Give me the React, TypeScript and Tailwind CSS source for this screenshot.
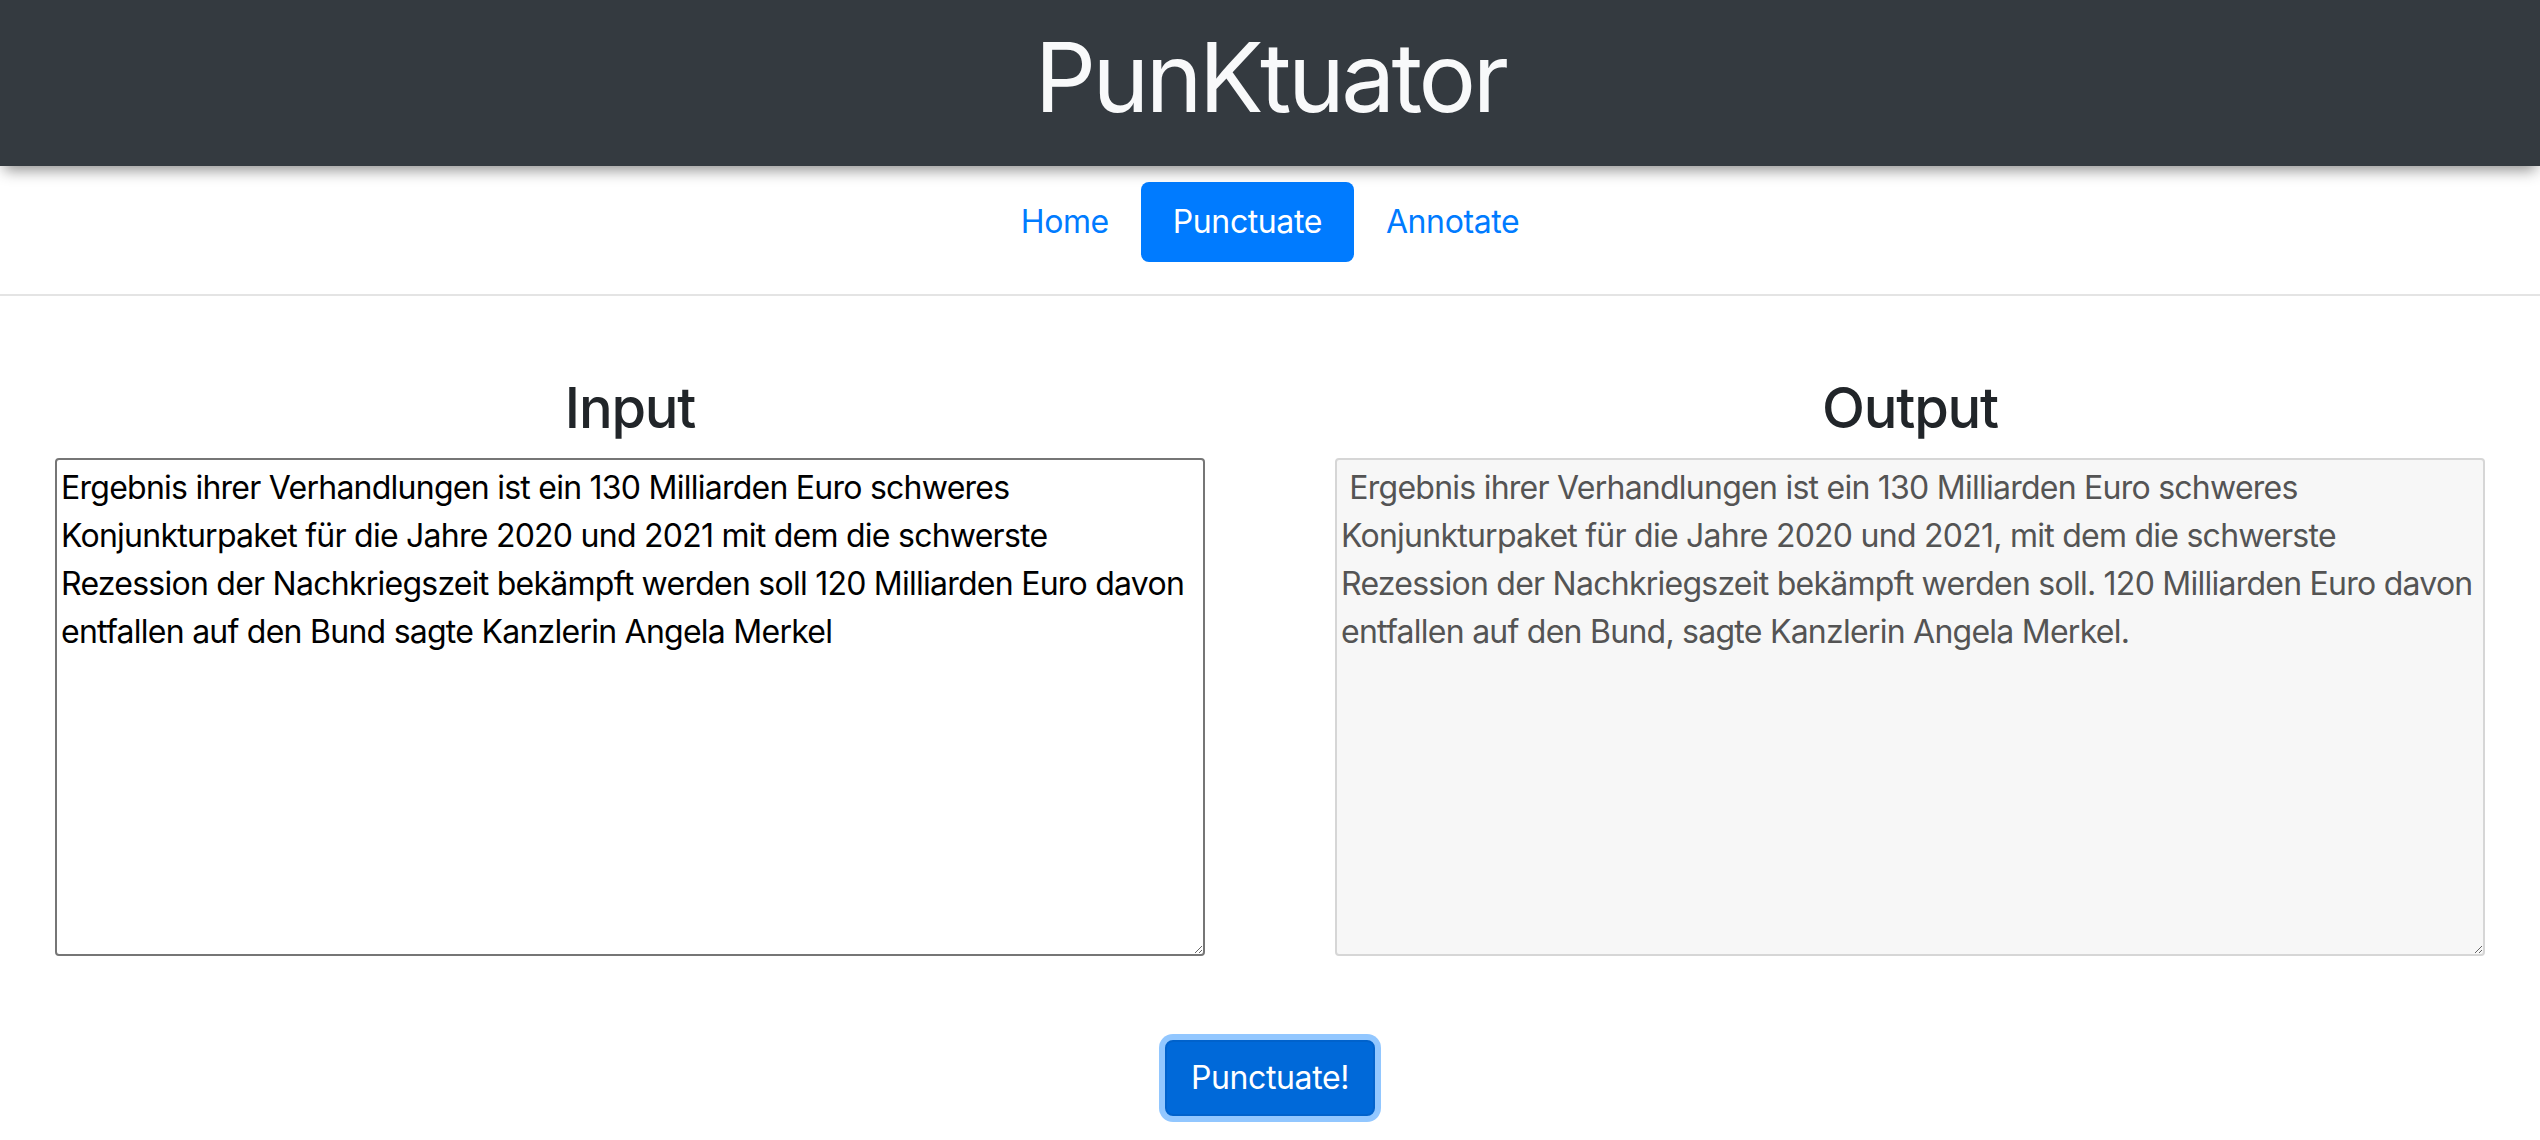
import { useState } from "react";

const INPUT_TEXT =
  "Ergebnis ihrer Verhandlungen ist ein 130 Milliarden Euro schweres Konjunkturpaket für die Jahre 2020 und 2021 mit dem die schwerste Rezession der Nachkriegszeit bekämpft werden soll 120 Milliarden Euro davon entfallen auf den Bund sagte Kanzlerin Angela Merkel";

const OUTPUT_TEXT =
  " Ergebnis ihrer Verhandlungen ist ein 130 Milliarden Euro schweres Konjunkturpaket für die Jahre 2020 und 2021, mit dem die schwerste Rezession der Nachkriegszeit bekämpft werden soll. 120 Milliarden Euro davon entfallen auf den Bund, sagte Kanzlerin Angela Merkel.";

export default function App() {
  const [input, setInput] = useState(INPUT_TEXT);
  const [page, setPage] = useState("punctuate");

  const links = [
    { key: "home", label: "Home" },
    { key: "punctuate", label: "Punctuate" },
    { key: "annotate", label: "Annotate" },
  ];

  return (
    <div className="min-h-screen bg-white font-['Inter',sans-serif] text-[#212529]">
      <header className="relative z-10 h-[166px] bg-[#343a40] pt-[20px] text-center shadow-[0_8px_14px_-4px_rgba(0,0,0,0.45)]">
        <h1 className="text-[96px] font-normal leading-[1.2] tracking-[-3.5px] text-[#f8f9fa]">
          PunKtuator
        </h1>
      </header>

      <nav className="flex justify-center border-b-2 border-[#e4e4e4] pt-4 pb-8">
        {links.map((l) => (
          <a
            key={l.key}
            href="#"
            onClick={(e) => {
              e.preventDefault();
              setPage(l.key);
            }}
            className={
              page === l.key
                ? "rounded-lg bg-[#007bff] px-8 py-4 text-[32px] leading-[48px] tracking-[-0.4px] text-white"
                : "rounded-lg px-8 py-4 text-[32px] leading-[48px] tracking-[-0.4px] text-[#007bff]"
            }
          >
            {l.label}
          </a>
        ))}
      </nav>

      <main className="grid grid-cols-2 gap-[130px] px-[55px] pt-[79px]">
        <div>
          <h3 className="mb-4 text-center text-[56px] font-medium leading-[1.2] tracking-[-1.2px]">
            Input
          </h3>
          <textarea
            value={input}
            onChange={(e) => setInput(e.target.value)}
            className="block h-[498px] w-full rounded border-2 border-[#767676] bg-white p-1 text-[32px] leading-[48px] tracking-[-0.75px] text-black outline-none"
          />
        </div>
        <div>
          <h3 className="mb-4 text-center text-[56px] font-medium leading-[1.2] tracking-[-1.2px]">
            Output
          </h3>
          <textarea
            readOnly
            value={OUTPUT_TEXT}
            className="block h-[498px] w-full rounded border-2 border-[#d6d6d6] bg-[#f7f7f7] p-1 text-[32px] leading-[48px] tracking-[-0.75px] text-[#545454] outline-none"
          />
        </div>
      </main>

      <div className="mt-[84px] flex justify-center">
        <button className="cursor-pointer rounded-lg border-2 border-[#0062cc] bg-[#0069d9] px-6 py-3 text-[32px] leading-[48px] tracking-[-0.4px] text-white shadow-[0_0_0_6px_rgba(38,143,255,0.5)]">
          Punctuate!
        </button>
      </div>
    </div>
  );
}
